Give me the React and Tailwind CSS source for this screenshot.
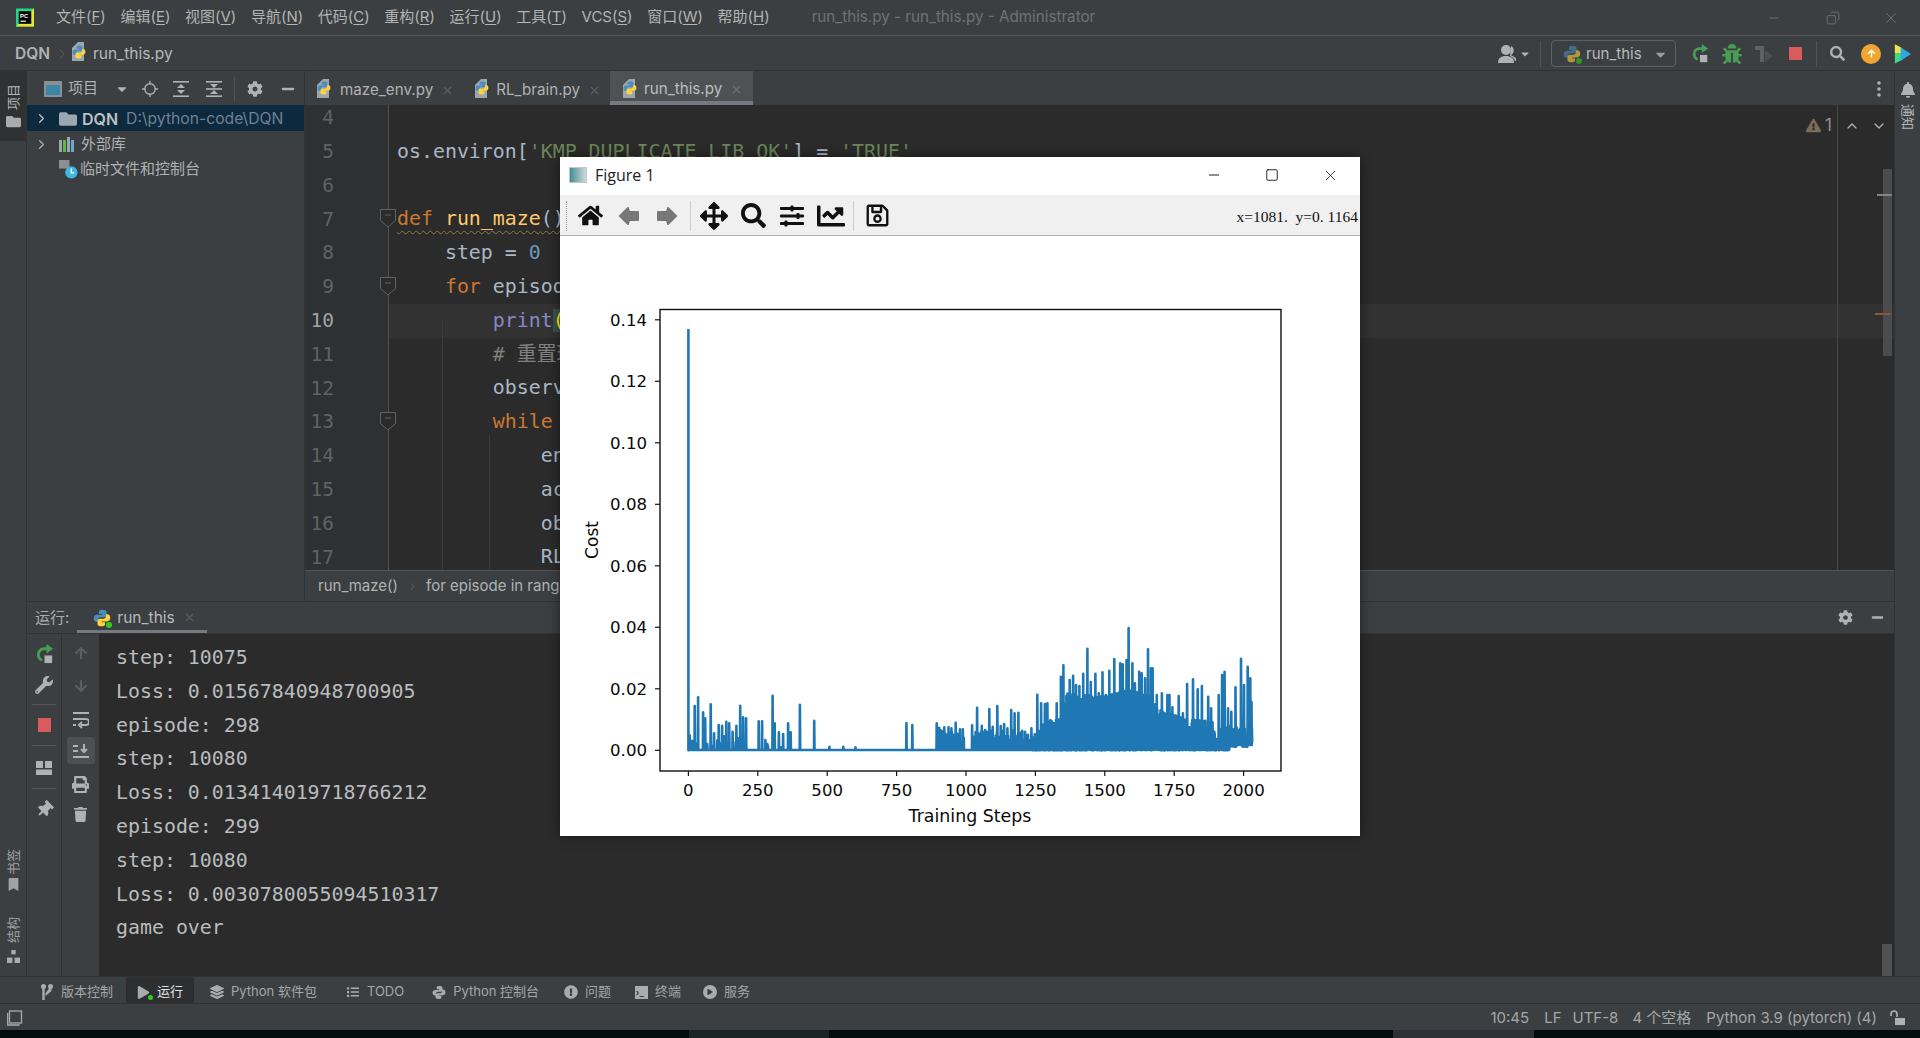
import React from "react";
import { FaHome, FaArrowsAlt, FaSearch, FaSlidersH, FaChartLine, FaRegSave, FaCog, FaMinus, FaBug, FaWrench, FaThumbtack, FaPrint, FaTrash, FaBell, FaBookmark, FaLayerGroup, FaList, FaExclamationCircle, FaFolder, FaExclamationTriangle, FaArrowUp, FaArrowDown, FaCaretDown, FaPlay } from "react-icons/fa";
import { ChevronRight, ChevronUp, ChevronDown, X, Minus, Square, Copy, Locate } from "lucide-react";

const UI = "font-['Inter','Noto_Sans_CJK_SC',sans-serif]";
const MONO = "font-['DejaVu_Sans_Mono','Noto_Sans_CJK_SC',monospace]";

function PyLogo({ size = 16, muted = false, dot = false, className = "" }) {
  return (
    <span className={`relative inline-flex shrink-0 ${className}`} style={{ width: size, height: size, opacity: muted ? 0.6 : 1 }}>
      <svg viewBox="0 0 24 24" width={size} height={size}>
        <path fill="#4b8bbe" d="M11.9 1C8.2 1 8 2.8 8 3.6V6.5h4.2v1H5.2C3 7.5 1 9 1 12.2c0 3.5 1.8 4.8 3.8 4.8h1.9v-2.7c0-2 1.6-3.4 3.4-3.4h5c1.6 0 2.9-1.3 2.9-3V3.7C18 2 16.2 1 11.9 1z" />
        <path fill="#ffd43b" d="M12.1 23c3.7 0 3.9-1.8 3.9-2.6v-2.9h-4.2v-1h7c2.2 0 4.2-1.5 4.2-4.7 0-3.5-1.8-4.8-3.8-4.8h-1.9v2.7c0 2-1.6 3.4-3.4 3.4h-5c-1.6 0-2.9 1.3-2.9 3v4.2C6 22 7.8 23 12.1 23z" />
      </svg>
      {dot && <span className="absolute right-[-1px] bottom-[-1px] w-[6px] h-[6px] rounded-full bg-[#2ecc1e]" />}
    </span>
  );
}

function PyFile() {
  return (
    <span className="relative inline-block w-[18px] h-[20px] shrink-0">
      <svg viewBox="0 0 18 20" width="18" height="20" className="absolute left-0 top-0">
        <path fill="#9aa7b0" d="M0 6l6-6h6v19H0z" />
      </svg>
      <PyLogo size={14} className="absolute right-0 bottom-0" />
    </span>
  );
}

function Rerun({ size = 22 }) {
  return (
    <svg viewBox="0 0 22 22" width={size} height={size}>
      <path fill="none" stroke="#499c54" strokeWidth="3" d="M15 5H10.5A6 6 0 0 0 4.5 11c0 3 1.6 5 4 6" />
      <path fill="#499c54" d="M13 0l7 5-7 5z" />
      <rect x="11" y="12" width="8" height="8" fill="#afb1b3" />
    </svg>
  );
}

function ExpandIcon({ collapse }) {
  return (
    <svg viewBox="0 0 16 16" width="16" height="16" fill="#afb1b3">
      <rect x="0" y="0" width="16" height="1.6" />
      <rect x="0" y="14.4" width="16" height="1.6" />
      {collapse ? (
        <><path d="M8 7L4 3h8z" /><path d="M8 9l4 4H4z" /><rect x="0" y="7.2" width="16" height="1.6" /></>
      ) : (
        <><path d="M8 3l4 4H4z" /><path d="M8 13L4 9h8z" /></>
      )}
    </svg>
  );
}

function BlockArrow({ flip }) {
  return (
    <svg viewBox="0 0 22 20" width="22" height="20" className={flip ? "-scale-x-100" : ""}>
      <path d="M10 2 L2 10 L10 18 L11 14 H20 V6 H11 Z" fill="#777" stroke="#777" strokeWidth="2" strokeLinejoin="round" />
    </svg>
  );
}

const lineBase = "flex h-[33.8px] items-center";
const s = {
  k: "text-[#cc7832]", st: "text-[#6a8759]", n: "text-[#6897bb]", b: "text-[#8888c6]", c: "text-[#808080]", f: "text-[#ffc66d]",
};
const CODE = [
  [4, null],
  [5, <>os.environ[<span className={s.st}>'KMP_DUPLICATE_LIB_OK'</span>] = <span className={s.st}>'TRUE'</span></>],
  [6, null],
  [7, <span className="underline decoration-wavy decoration-[#8d7a3c] decoration-1 underline-offset-[5px]"><span className={s.k}>def </span><span className={s.f}>run_maze</span>():</span>],
  [8, <>{"    "}step = <span className={s.n}>0</span></>],
  [9, <>{"    "}<span className={s.k}>for </span>episode <span className={s.k}>in </span><span className={s.b}>range</span>(<span className={s.n}>300</span>):</>],
  [10, <>{"        "}<span className={s.b}>print</span><span className="bg-[#3b514d] text-[#ffef28]">(</span>episode)</>],
  [11, <span className={s.c}>{"        "}# 重置环境</span>],
  [12, <>{"        "}observation = env.reset()</>],
  [13, <>{"        "}<span className={s.k}>while </span><span className={s.k}>True</span>:</>],
  [14, <>{"            "}env.render()</>],
  [15, <>{"            "}action = RL.choose_action(observation)</>],
  [16, <>{"            "}observation_, reward, done = env.step(action)</>],
  [17, <>{"            "}RL.store_transition(observation, action)</>],
];

const CONSOLE = ["step: 10075", "Loss: 0.01567840948700905", "episode: 298", "step: 10080", "Loss: 0.013414019718766212", "episode: 299", "step: 10080", "Loss: 0.0030780055094510317", "game over"];

const MENUS = [["文件(", "F", ")"], ["编辑(", "E", ")"], ["视图(", "V", ")"], ["导航(", "N", ")"], ["代码(", "C", ")"], ["重构(", "R", ")"], ["运行(", "U", ")"], ["工具(", "T", ")"], ["VCS(", "S", ")"], ["窗口(", "W", ")"], ["帮助(", "H", ")"]];

/* ---------- chart data: coordinates measured off the plot ---------- */
const PEAKS = [[130,438],[138,412],[150,457],[155,475],[168,433],[176,520],[187,495],[195,497],[205,485],[212,490],[220,515],[229,497],[238,437],[245,472],[252,475],[282,484],[290,484],[298,540],[315,407],[320,490],[330,517],[340,522],[352,490],[358,517],[380,434],[414,482],[450,560],[483,560],[512,562],[633,489],[647,495],[705,490],[711,503],[723,502],[733,502],[740,505],[750,488],[760,508],[767,508],[789,496],[801,443],[812,497],[820,510],[830,447],[838,500],[849,438],[857,498],[865,492],[873,505],[882,450],[890,460],[899,458],[908,512],[915,515],[930,505],[944,404],[953,430],[962,432],[968,430],[975,480],[990,430],[1000,350],[1006,316],[1012,435],[1021,360],[1029,347],[1036,375],[1044,378],[1053,341],[1063,266],[1071,366],[1082,341],[1090,400],[1099,337],[1107,405],[1115,332],[1127,297],[1134,400],[1141,310],[1147,313],[1156,300],[1161,204],[1170,310],[1176,370],[1186,335],[1192,340],[1200,355],[1207,268],[1214,325],[1218,325],[1228,405],[1240,400],[1253,405],[1258,405],[1265,442],[1280,408],[1290,460],[1300,372],[1314,358],[1325,388],[1335,378],[1350,410],[1357,445],[1375,405],[1383,345],[1389,335],[1397,445],[1405,455],[1415,382],[1428,296],[1435,375],[1444,320],[1450,355],[1453,425]];
const ENV = [[930,535],[960,490],[1000,475],[1010,400],[1100,410],[1160,390],[1210,405],[1230,445],[1290,475],[1360,485],[1370,540],[1385,495],[1455,505]];
function envAt(x) {
  for (let i = 1; i < ENV.length; i++) {
    if (x <= ENV[i][0]) {
      const [a, b] = ENV[i - 1], [c, d] = ENV[i];
      return b + ((d - b) * (x - a)) / (c - a);
    }
  }
  return 500;
}
function buildPath() {
  let seed = 12345;
  const rnd = () => ((seed = (seed * 1664525 + 1013904223) % 4294967296) / 4294967296);
  const segs = [];
  PEAKS.forEach(([x, t]) => segs.push([x, t, x > 1000 ? 555 : 570]));
  const sparse = [[118, 255, 525, 0.22], [300, 360, 540, 0.12], [705, 770, 510, 0.45], [789, 930, 510, 0.6]];
  sparse.forEach(([a, b, t, p]) => {
    for (let x = a; x < b; x += 1.4) if (rnd() < p) segs.push([x, t + rnd() * 35, 570]);
  });
  for (let x = 930; x < 1455; x += 1.3) {
    const bottom = x > 1400 ? 560 - (x - 1400) * 0.25 : rnd() < 0.12 ? 545 + rnd() * 15 : 568 + rnd() * 3;
    const r = rnd();
    segs.push([x, Math.min(envAt(x) + r * r * 70, 560), bottom]);
  }
  segs.sort((a, b) => a[0] - b[0]);
  const X = (x) => (640 + x / 2.376).toFixed(1);
  const Y = (y) => (560 + y / 3).toFixed(1);
  let d = `M${X(115)} 329L${X(115)} ${Y(571)}L${X(120)} ${Y(569)}`;
  let prev = 120;
  segs.forEach(([x, t, b]) => {
    d += `L${X(x - 0.5)} ${Y(Math.max(b, x > prev + 3 ? 568 : b))}L${X(x)} ${Y(t)}L${X(x + 0.6)} ${Y(b)}`;
    prev = x;
  });
  return d;
}
const CHART_PATH = buildPath();

function Chart() {
  const xt = [0, 250, 500, 750, 1000, 1250, 1500, 1750, 2000];
  const yt = ["0.00", "0.02", "0.04", "0.06", "0.08", "0.10", "0.12", "0.14"];
  return (
    <svg viewBox="560 236 800 600" width="800" height="600" className="block" fontFamily="'DejaVu Sans',sans-serif" fontSize="16.6" fill="#0a0a0a">
      <rect x="660" y="309.5" width="621" height="461.5" fill="#fff" stroke="#111" strokeWidth="1.4" />
      <path d={CHART_PATH} fill="none" stroke="#1f77b4" strokeWidth="2.6" strokeLinejoin="round" />
      {xt.map((t, i) => (
        <g key={t}>
          <line x1={688.4 + i * 69.4} x2={688.4 + i * 69.4} y1="771" y2="776" stroke="#111" strokeWidth="1.2" />
          <text x={688.4 + i * 69.4} y="796" textAnchor="middle">{t}</text>
        </g>
      ))}
      {yt.map((t, i) => (
        <g key={t}>
          <line x1="655" x2="660" y1={750.3 - i * 61.5} y2={750.3 - i * 61.5} stroke="#111" strokeWidth="1.2" />
          <text x="647" y={756.3 - i * 61.5} textAnchor="end">{t}</text>
        </g>
      ))}
      <text x="970" y="822" textAnchor="middle" fontSize="17.4">Training Steps</text>
      <text transform="translate(598 540) rotate(-90)" textAnchor="middle" fontSize="17">Cost</text>
    </svg>
  );
}

function FigureWindow() {
  return (
    <div className="absolute left-[560px] top-[157px] w-[800px] h-[679px] bg-white flex flex-col shadow-[0_0_12px_rgba(0,0,0,0.45)]">
      <div className="h-[38px] flex items-center shrink-0 pb-[2px]">
        <span className="ml-[9px] w-[18px] h-[16px] border border-[#c4c8cc] bg-gradient-to-r from-[#3c8f96] to-[#cfd8dc]" />
        <span className="ml-[8px] text-[16px] text-[#222] font-['Open_Sans',sans-serif]">Figure 1</span>
        <div className="ml-auto flex items-center text-[#111]">
          <Minus size={16} strokeWidth={1.4} />
          <Square size={14} strokeWidth={1.5} className="ml-[43px]" />
          <X size={17} strokeWidth={1.1} className="ml-[43px] mr-[21px]" />
        </div>
      </div>
      <div className="h-[41px] shrink-0 bg-[#f0f0f0] border-b border-[#b4b4b4] flex items-center text-[#111] relative pt-[1px]">
        <span className="ml-[6px] h-[30px] border-l border-dotted border-[#999]" />
        <FaHome size={25} className="ml-[11px]" />
        <span className="ml-[15px]"><BlockArrow /></span>
        <span className="ml-[16px]"><BlockArrow flip /></span>
        <span className="ml-[12px] h-[30px] border-l border-[#d0d0d0]" />
        <FaArrowsAlt size={28} className="ml-[9px]" />
        <FaSearch size={25} className="ml-[13px]" />
        <FaSlidersH size={24} className="ml-[14px]" />
        <FaChartLine size={28} className="ml-[13px]" />
        <span className="ml-[8px] h-[30px] border-l border-[#d0d0d0]" />
        <FaRegSave size={25} className="ml-[11px]" />
        <span className="ml-auto mr-[2px] mt-[2px] text-[15.5px] font-['Liberation_Serif',serif] text-[#111] whitespace-pre">x=1081.  y=0. 1164</span>
      </div>
      <Chart />
    </div>
  );
}

function SideText({ children, flip = true }) {
  return <span className={`[writing-mode:vertical-rl] [text-orientation:sideways] text-[13px] leading-none ${flip ? "rotate-180" : ""}`}>{children}</span>;
}

function BottomTool({ icon, children, className = "", active }) {
  return (
    <div className={`flex items-center h-full gap-[7px] text-[13px] pt-[4px] ${active ? "bg-[#2d2f30] text-[#e2e3e3] pl-[10px] pr-[11px]" : "text-[#a4a7a9]"} ${className}`}>
      <span className="w-[14px] flex justify-center text-[#a9acae]">{icon}</span>
      <span className="whitespace-pre">{children}</span>
    </div>
  );
}

export default function App() {
  return (
    <div className={`relative w-[1920px] h-[1038px] overflow-hidden bg-[#3c3f41] text-[#b4b6b8] flex flex-col ${UI}`}>
      {/* title bar */}
      <div className="h-[36px] shrink-0 flex items-center border-b border-[#515455] text-[15px]">
        <svg viewBox="0 0 20 20" width="18" height="19" className="ml-[16px] shrink-0">
          <rect x="0" y="0" width="20" height="20" fill="#21d789" />
          <path d="M0 20L20 0V20z" fill="#e8e833" />
          <rect x="3" y="3" width="14" height="14" fill="#000" />
          <text x="4.5" y="10" fontSize="6.5" fontWeight="700" fill="#fff" fontFamily="'Liberation Sans',sans-serif">PC</text>
          <rect x="5" y="13.5" width="6" height="1.3" fill="#fff" />
        </svg>
        <div className="ml-[22px] flex gap-[14.6px] text-[#b2b4b5]">
          {MENUS.map(([a, u, c]) => (
            <span key={u}>{a}<span className="underline underline-offset-2">{u}</span>{c}</span>
          ))}
        </div>
        <span className="ml-[42px] text-[15.2px] text-[#6f7274]">run_this.py - run_this.py - Administrator</span>
        <div className="ml-auto flex items-center text-[#7d8082]">
          <Minus size={14} strokeWidth={1.3} />
          <Copy size={14} strokeWidth={1.2} className="ml-[45px] -scale-x-100" />
          <X size={18} strokeWidth={1} className="ml-[42px] mr-[20px]" />
        </div>
      </div>

      {/* navigation bar */}
      <div className="h-[35px] shrink-0 flex items-center border-b border-[#323232] text-[15.5px] pt-[1px]">
        <span className="ml-[15px] font-semibold text-[#b0b2b4]">DQN</span>
        <ChevronRight size={18} strokeWidth={1} className="ml-[3px] text-[#606366]" />
        <span className="ml-[1px]"><PyFile /></span>
        <span className="ml-[3px] text-[#b7b9ba]">run_this.py</span>
        <div className="ml-auto flex items-center">
          <svg viewBox="0 0 20 20" width="20" height="20" fill="#afb1b3"><circle cx="8" cy="6" r="5" /><path d="M0 19c0-5 3-7 8-7s8 2 8 7z" /><path d="M13 2a5 5 0 0 1 0 9l5 3v3h-1c-1-3-3-4-5-5z" /></svg>
          <FaCaretDown size={12} className="ml-[1px] text-[#afb1b3]" />
          <span className="ml-[9px] h-[26px] border-l border-[#515455]" />
          <div className="ml-[10px] w-[125px] h-[27px] rounded-[4px] border border-[#5e6163] flex items-center pl-[11px] pt-[1px]">
            <PyLogo size={18} muted dot />
            <span className="ml-[5px] text-[#b7b9ba] text-[15px]">run_this</span>
            <FaCaretDown size={15} className="ml-[11px] text-[#9a9c9e]" />
          </div>
          <span className="ml-[14px]"><Rerun size={20} /></span>
          <FaBug size={20} className="ml-[12px] text-[#499c54]" />
          <svg viewBox="0 0 20 20" width="20" height="20" className="ml-[12px]"><path fill="#5f6163" d="M1 2h9v16H6V6H1z" /><path fill="#4e5052" d="M11 6l8 6-8 6z" /></svg>
          <span className="ml-[15px] w-[13px] h-[13px] bg-[#d75c5c]" />
          <span className="ml-[14px] h-[26px] border-l border-[#515455]" />
          <FaSearch size={15} className="ml-[13px] text-[#afb1b3]" />
          <span className="ml-[16px] w-[20px] h-[20px] rounded-full bg-[#f0a732] flex items-center justify-center"><FaArrowUp size={9} className="text-white" /></span>
          <svg viewBox="0 0 20 20" width="19" height="20" className="ml-[12px] mr-[8px]"><path fill="#3ddc84" d="M2 0l8 4v12l-8 4z" /><path fill="#2fa8e0" d="M8 3l11 7-11 7z" /><path fill="#f3e14d" d="M2 0l6 3v6L2 9z" /></svg>
        </div>
      </div>

      {/* main area */}
      <div className="flex-1 min-h-0 flex">
        {/* left strip */}
        <div className="w-[27px] shrink-0 flex flex-col border-r border-[#323232] text-[#b4b6b8]">
          <div className="h-[70px] bg-[#2f3133] flex flex-col items-center pt-[13px] gap-[4px]">
            <SideText>项目</SideText>
            <FaFolder size={15} className="text-[#a9acae]" />
          </div>
          <div className="mt-auto mb-[13px] flex flex-col items-center text-[#a0a3a5]">
            <SideText>书签</SideText>
            <FaBookmark size={13} className="mt-[3px]" />
            <span className="mt-[26px]"><SideText>结构</SideText></span>
            <svg viewBox="0 0 12 12" width="13" height="13" className="mt-[1px]" fill="#a9acae"><rect x="4" y="0" width="4" height="4" /><rect x="0" y="7" width="5" height="5" /><rect x="7" y="7" width="5" height="5" /></svg>
          </div>
        </div>

        {/* center */}
        <div className="flex-1 min-w-0 flex flex-col">
          <div className="h-[530px] shrink-0 flex">
            {/* project panel */}
            <div className="w-[278px] shrink-0 flex flex-col border-r border-[#323232]">
              <div className="h-[34px] shrink-0 flex items-center text-[#b0b2b4] text-[15px] pt-[1px]">
                <span className="ml-[17px] w-[18px] h-[16px] bg-[#3a87a8] border-[2px] border-[#8c9093] border-t-[4px]" />
                <span className="ml-[6px]">项目</span>
                <FaCaretDown size={14} className="ml-[17px] text-[#afb1b3]" />
                <Locate size={18} strokeWidth={1.8} className="ml-[12px] text-[#afb1b3]" />
                <span className="ml-[14px]"><ExpandIcon /></span>
                <span className="ml-[17px]"><ExpandIcon collapse /></span>
                <span className="ml-[12px] h-[24px] border-l border-[#515455]" />
                <FaCog size={16} className="ml-[12px] text-[#afb1b3]" />
                <FaMinus size={14} className="ml-[18px] text-[#afb1b3]" />
              </div>
              <div className="h-[26px] bg-[#0d293e] flex items-center text-[16px] pt-[1px]">
                <ChevronRight size={15} strokeWidth={2} className="ml-[7px] text-[#c2c4c6]" />
                <FaFolder size={18} className="ml-[10px] text-[#9aa7b0]" />
                <span className="ml-[5px] font-semibold text-[#bfc1c3]">DQN</span>
                <span className="ml-[8px] text-[#6f8192] text-[15.7px]">D:\python-code\DQN</span>
              </div>
              <div className="h-[26px] flex items-center text-[15px] text-[#b0b2b4] pt-[1px]">
                <ChevronRight size={15} strokeWidth={2} className="ml-[7px] text-[#b0b2b4]" />
                <svg viewBox="0 0 18 16" width="18" height="16" className="ml-[10px]"><rect x="0" y="3" width="3" height="12" fill="#9aa7b0" /><rect x="4" y="3" width="3" height="12" fill="#62b543" /><rect x="8" y="0" width="3" height="15" fill="#9aa7b0" /><rect x="12" y="3" width="3" height="12" fill="#6fa8c8" /></svg>
                <span className="ml-[4px]">外部库</span>
              </div>
              <div className="h-[25px] flex items-center text-[15px] text-[#b0b2b4]">
                <svg viewBox="0 0 20 20" width="19" height="19" className="ml-[32px]"><rect x="0" y="0" width="11" height="9" fill="#8c9093" /><circle cx="13" cy="13" r="6.5" fill="#40b6e0" /><path d="M13 9v4.5h3" stroke="#fff" strokeWidth="1.4" fill="none" /></svg>
                <span className="ml-[2px]">临时文件和控制台</span>
              </div>
            </div>

            {/* editor column */}
            <div className="flex-1 min-w-0 flex flex-col">
              <div className="h-[34px] shrink-0 flex items-center text-[15.2px] relative">
                <span className="ml-[12px] mt-[4px]"><PyFile /></span>
                <span className="ml-[5px] mt-[4px] text-[#b0b2b4]">maze_env.py</span>
                <X size={13} className="ml-[8px] mt-[4px] text-[#5d6062]" />
                <span className="ml-[21px] mt-[4px]"><PyFile /></span>
                <span className="ml-[3px] mt-[4px] text-[#b0b2b4]">RL_brain.py</span>
                <X size={13} className="ml-[8px] mt-[4px] text-[#5d6062]" />
                <div className="ml-[9px] h-full w-[143px] bg-[#4e5254] border-b-[4px] border-[#747a80] flex items-center pl-[13px] pt-[6px]">
                  <PyFile />
                  <span className="ml-[3px] text-[#bcbec0]">run_this.py</span>
                  <X size={13} className="ml-[8px] text-[#6f7274]" />
                </div>
                <svg viewBox="0 0 4 16" width="4" height="16" className="absolute right-[13px] top-[10px]" fill="#afb1b3"><circle cx="2" cy="2" r="1.8" /><circle cx="2" cy="8" r="1.8" /><circle cx="2" cy="14" r="1.8" /></svg>
              </div>
              <div className={`h-[465px] shrink-0 bg-[#2b2b2b] relative overflow-hidden text-[19.9px] ${MONO}`}>
                <div className="-mt-[4px]">
                  {CODE.map(([n, c]) => (
                    <div key={n} className={lineBase}>
                      <div className={`w-[83px] h-full shrink-0 flex items-center justify-end pr-[54px] text-[19.5px] bg-[#2f3031] ${n === 10 ? "text-[#a4a3a3]" : "text-[#606366]"}`}>{n}</div>
                      <div className={`flex-1 h-full flex items-center pl-[8px] text-[#a9b7c6] border-l border-[#505253] ${n === 10 ? "bg-[#323232]" : ""}`}>
                        <span className="whitespace-pre">{c}</span>
                      </div>
                    </div>
                  ))}
                </div>
                {/* indent guides */}
                <span className="absolute left-[137px] top-[215px] bottom-0 border-l border-[#3b3b3b]" />
                <span className="absolute left-[184px] top-[330px] bottom-0 border-l border-[#3b3b3b]" />
                {/* fold markers */}
                {[113, 181, 316].map((t) => (
                  <svg key={t} viewBox="0 0 16 19" width="16" height="19" className="absolute left-[75px]" style={{ top: t - 9 }}>
                    <path d="M.5.5h15v11L8 18 .5 11.5z" fill="#2b2b2b" stroke="#606366" />
                    <path d="M5 6h6" stroke="#606366" />
                  </svg>
                ))}
                {/* inspection widget */}
                <div className="absolute right-[7px] top-[8px] flex items-center text-[#8f9294] font-['Inter',sans-serif] text-[17px]">
                  <FaExclamationTriangle size={15} className="text-[#7b6e57]" />
                  <span className="ml-[4px]">1</span>
                  <ChevronUp size={16} strokeWidth={2} className="ml-[12px] text-[#afb1b3]" />
                  <ChevronDown size={16} strokeWidth={2} className="ml-[11px] text-[#afb1b3]" />
                </div>
                {/* right margin line */}
                <span className="absolute left-[1532px] top-0 bottom-0 border-l border-[#454749]" />
                {/* scrollbar */}
                <div className="absolute left-[1578px] top-[64px] w-[9px] h-[187px] bg-[#4a4c4e]">
                  <span className="absolute left-[-6px] w-[15px] h-[2px] top-[25px] bg-[#8a8377]" />
                </div>
                <span className="absolute left-[1570px] top-[208px] w-[16px] h-[2px] bg-[#8a5a36]" />
              </div>
              <div className="flex-1 flex items-center border-t border-[#515455] bg-[#3c3f41] text-[15px] text-[#b0b2b4] pl-[13px]">
                <span>run_maze()</span>
                <ChevronRight size={11} className="ml-[9px] mr-[8px] text-[#606366]" />
                <span>for episode in range(300)</span>
              </div>
            </div>
          </div>

          {/* run tool window */}
          <div className="h-[33px] shrink-0 flex items-center border-y border-[#323232] text-[15px] relative">
            <span className="ml-[8px] mt-[1px] text-[#a9acae]">运行:</span>
            <div className="ml-[8px] h-full w-[130px] border-b-[3px] border-[#747a80] flex items-center pl-[16px] pt-[3px]">
              <PyLogo size={18} dot />
              <span className="ml-[6px] text-[15.5px] text-[#b7b9ba]">run_this</span>
              <X size={13} className="ml-[8px] text-[#5d6062]" />
            </div>
            <div className="ml-auto flex items-center text-[#afb1b3]">
              <FaCog size={15} />
              <FaMinus size={13} className="ml-[18px] mr-[10px]" />
            </div>
          </div>
          <div className="flex-1 min-h-0 flex">
            <div className="w-[35px] shrink-0 flex flex-col items-center border-r border-[#323232] text-[#afb1b3] pt-[10px]">
              <Rerun size={21} />
              <FaWrench size={18} className="mt-[11px]" />
              <span className="mt-[10px] w-[24px] border-t border-[#515455]" />
              <span className="mt-[13px] w-[13px] h-[14px] bg-[#d75c5c]" />
              <span className="mt-[13px] w-[24px] border-t border-[#515455]" />
              <svg viewBox="0 0 16 14" width="16" height="14" fill="#afb1b3" className="mt-[15px]"><rect x="0" y="0" width="7" height="7" /><rect x="9" y="0" width="7" height="7" /><rect x="0" y="8.5" width="16" height="5.5" /></svg>
              <span className="mt-[13px] w-[24px] border-t border-[#515455]" />
              <FaThumbtack size={17} className="mt-[12px] rotate-45" />
            </div>
            <div className="w-[37px] shrink-0 flex flex-col items-center text-[#afb1b3] pt-[12px]">
              <FaArrowUp size={14} className="text-[#5b5e60]" />
              <FaArrowDown size={14} className="mt-[19px] text-[#5b5e60]" />
              <svg viewBox="0 0 16 18" width="16" height="18" fill="none" stroke="#afb1b3" strokeWidth="2" className="mt-[18px]"><path d="M0 2h16M0 8h13a2.5 2.5 0 0 1 0 6H8M0 14h3" /><path d="M9 11l-3 3 3 3" /></svg>
              <span className="mt-[8px] w-[28px] h-[27px] rounded-[3px] bg-[#4c5052] flex items-center justify-center">
                <svg viewBox="0 0 16 14" width="16" height="14" fill="none" stroke="#afb1b3" strokeWidth="2"><path d="M0 2h5M0 7h5M0 13h16M11 0v8" /><path d="M8 5l3 3 3-3" /></svg>
              </span>
              <FaPrint size={17} className="mt-[12px]" />
              <FaTrash size={15} className="mt-[14px]" />
            </div>
            <div className={`flex-1 bg-[#2b2b2b] pt-[7px] pl-[17px] text-[19.9px] text-[#b9bcbd] relative ${MONO}`}>
              {CONSOLE.map((l, i) => (
                <div key={i} className="h-[33.8px] flex items-center whitespace-pre">{l}</div>
              ))}
              <span className="absolute left-[1783px] bottom-0 w-[10px] h-[32px] bg-[#4f5153]" />
            </div>
          </div>
        </div>

        {/* right strip */}
        <div className="w-[26px] shrink-0 flex flex-col items-center border-l border-[#323232] pt-[11px] text-[#b4b6b8]">
          <FaBell size={16} className="text-[#afb1b3]" />
          <span className="mt-[6px]"><SideText flip={false}>通知</SideText></span>
        </div>
      </div>

      {/* bottom tool bar */}
      <div className="h-[28px] shrink-0 flex items-center border-y border-[#323232] pl-[40px]">
        <BottomTool icon={<svg viewBox="0 0 12 16" width="12" height="16" fill="#a9acae"><circle cx="2.5" cy="2.5" r="2.5" /><circle cx="9.5" cy="2.5" r="2.5" /><rect x="1.3" y="3" width="2.4" height="13" /><path d="M8.5 4h2v3l-6 5V9z" /></svg>}>版本控制</BottomTool>
        <BottomTool active className="ml-[13px]" icon={<span className="relative"><FaPlay size={13} /><span className="absolute -right-[3px] -bottom-[1px] w-[5px] h-[5px] rounded-full bg-[#2ecc1e]" /></span>}>运行</BottomTool>
        <BottomTool className="ml-[16px]" icon={<FaLayerGroup size={14} />}>Python 软件包</BottomTool>
        <BottomTool className="ml-[29px]" icon={<FaList size={12} />}>TODO</BottomTool>
        <BottomTool className="ml-[28px]" icon={<PyGray />}>Python 控制台</BottomTool>
        <BottomTool className="ml-[25px]" icon={<FaExclamationCircle size={14} />}>问题</BottomTool>
        <BottomTool className="ml-[23px]" icon={<span className="w-[13px] h-[13px] bg-[#a9acae] flex items-center text-[#3c3f41] text-[9px] font-bold leading-none pl-[1px]">›_</span>}>终端</BottomTool>
        <BottomTool className="ml-[22px]" icon={<span className="w-[14px] h-[14px] rounded-full bg-[#a9acae] flex items-center justify-center"><FaPlay size={6} className="text-[#3c3f41]" /></span>}>服务</BottomTool>
      </div>

      {/* status bar */}
      <div className="h-[26px] shrink-0 flex items-center text-[15px] text-[#a4a7a9] pt-[2px]">
        <svg viewBox="0 0 16 16" width="16" height="16" fill="none" stroke="#a9acae" strokeWidth="1.3" className="ml-[7px]"><rect x="2.5" y="1" width="12" height="12" /><path d="M0.7 3v12h12" /></svg>
        <span className="ml-auto">10:45</span>
        <span className="ml-[15px]">LF</span>
        <span className="ml-[11px]">UTF-8</span>
        <span className="ml-[14px]">4 个空格</span>
        <span className="ml-[15px]">Python 3.9 (pytorch) (4)</span>
        <svg viewBox="0 0 16 16" width="16" height="16" className="ml-[13px] mr-[14px]" fill="#afb1b3"><path d="M1 6V4a3 3 0 0 1 6 0v3" fill="none" stroke="#afb1b3" strokeWidth="1.6" /><rect x="5" y="8" width="10" height="7" /></svg>
      </div>

      {/* desktop edge */}
      <div className="h-[8px] shrink-0 bg-[#020c0f] flex">
        <span className="ml-[689px] w-[140px] bg-[#1a2326]" />
        <span className="ml-[564px] w-[141px] bg-[#2a3236]" />
      </div>

      <FigureWindow />
    </div>
  );
}

function PyGray() {
  return (
    <svg viewBox="0 0 24 24" width="15" height="15" fill="#a9acae">
      <path d="M11.9 1C8.2 1 8 2.8 8 3.6V6.5h4.2v1H5.2C3 7.5 1 9 1 12.2c0 3.5 1.8 4.8 3.8 4.8h1.9v-2.7c0-2 1.6-3.4 3.4-3.4h5c1.6 0 2.9-1.3 2.9-3V3.7C18 2 16.2 1 11.9 1z" />
      <path d="M12.1 23c3.7 0 3.9-1.8 3.9-2.6v-2.9h-4.2v-1h7c2.2 0 4.2-1.5 4.2-4.7 0-3.5-1.8-4.8-3.8-4.8h-1.9v2.7c0 2-1.6 3.4-3.4 3.4h-5c-1.6 0-2.9 1.3-2.9 3v4.2C6 22 7.8 23 12.1 23z" />
    </svg>
  );
}
